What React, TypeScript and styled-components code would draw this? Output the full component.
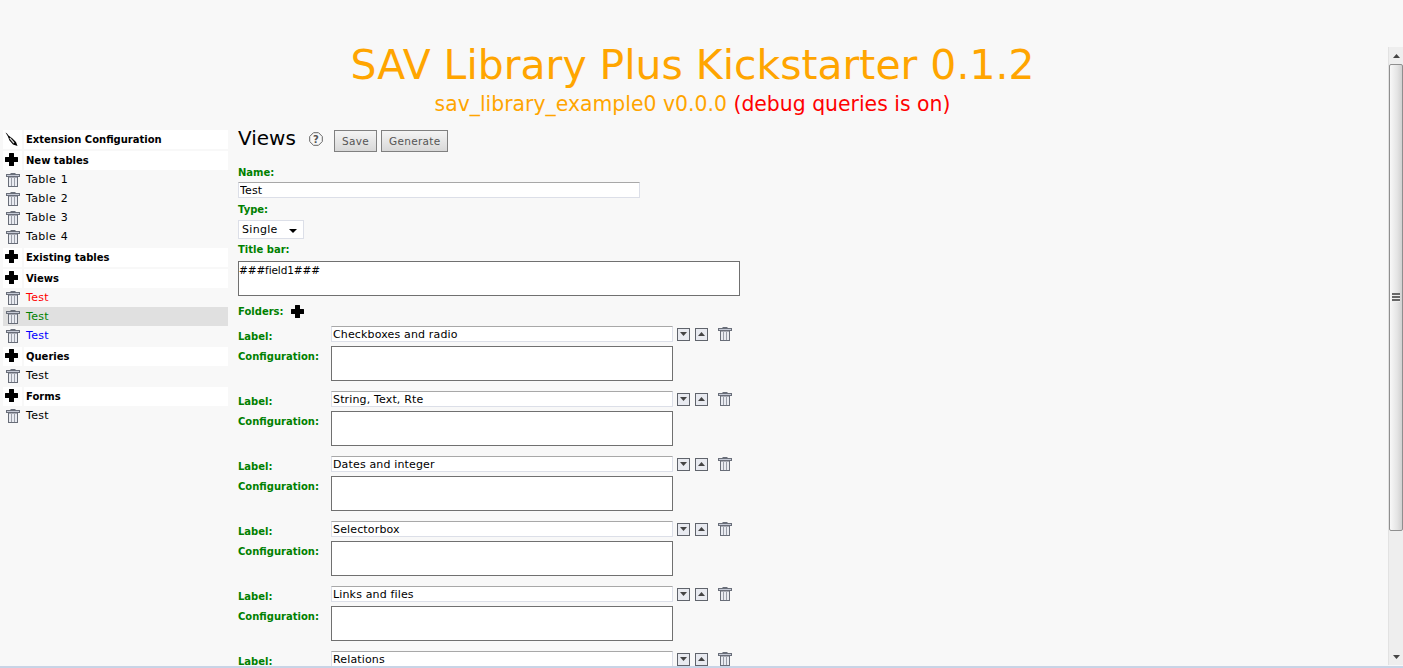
import React from 'react';
import styled, { createGlobalStyle } from 'styled-components';

const FONT = '"DejaVu Sans", Verdana, sans-serif';

const GlobalStyle = createGlobalStyle`
  html, body {
    margin: 0;
    padding: 0;
    height: 668px;
    overflow: hidden;
    background: #f8f8f8;
  }
`;

const PlusIcon = () => (
  <svg width='13' height='13' viewBox='0 0 13 13'>
    <path d='M4 0.500Q4 0 4.500 0H8.500Q9 0 9 0.500V4H12.500Q13 4 13 4.500V8.500Q13 9 12.500 9H9V12.500Q9 13 8.500 13H4.500Q4 13 4 12.500V9H0.500Q0 9 0 8.500V4.500Q0 4 0.500 4H4Z' fill='#000' />
  </svg>
);

const TrashIcon = () => (
  <svg width='14' height='14' viewBox='0 0 14 14'>
    <rect x='4.500' y='0' width='5' height='1.500' fill='#6a6f7a' />
    <rect x='0.500' y='1.500' width='13' height='2' fill='#c6cad6' stroke='#6a6f7a' strokeWidth='1' />
    <rect x='2.500' y='4' width='9' height='9.500' fill='#e9ebf1' stroke='#686d78' strokeWidth='1' />
    <path d='M5.500 5v8M8.500 5v8' stroke='#9a9ea8' strokeWidth='1' />
  </svg>
);

const BrushIcon = () => (
  <svg width='13' height='15' viewBox='0 0 13 15'>
    <path d='M0.500 0.500L2 1.500L3.500 3.500L7.500 6.500L11 10L12.500 14L8 12.500L4.500 8.500L2.800 4.200Z' fill='#000' />
    <path d='M4.800 6L9 11' stroke='#d8d8d8' strokeWidth='1.200' />
  </svg>
);

const HelpIcon = () => (
  <svg width='14' height='14' viewBox='0 0 14 14'>
    <path d='M4.500 0.700H9.500L13.300 4.500V9.500L9.500 13.300H4.500L0.700 9.500V4.500Z' fill='none' stroke='#666' strokeWidth='1' />
    <text x='7' y='10.500' textAnchor='middle' fontSize='10' fontWeight='bold' fontFamily={FONT} fill='#555'>?</text>
  </svg>
);

const ArrowIcon = ({ up }: { up?: boolean }) => (
  <svg width='7' height='4' viewBox='0 0 7 4'>
    <path d={up ? 'M3.500 0L7 4H0Z' : 'M0 0H7L3.500 4Z'} fill='#444' />
  </svg>
);

type Row = { kind: 'head' | 'item'; text: string; icon?: 'plus' | 'brush'; color?: string; selected?: boolean };

const menu: Row[] = [
  { kind: 'head', text: 'Extension Configuration', icon: 'brush' },
  { kind: 'head', text: 'New tables', icon: 'plus' },
  { kind: 'item', text: 'Table 1' },
  { kind: 'item', text: 'Table 2' },
  { kind: 'item', text: 'Table 3' },
  { kind: 'item', text: 'Table 4' },
  { kind: 'head', text: 'Existing tables', icon: 'plus' },
  { kind: 'head', text: 'Views', icon: 'plus' },
  { kind: 'item', text: 'Test', color: '#ff0000' },
  { kind: 'item', text: 'Test', color: '#008000', selected: true },
  { kind: 'item', text: 'Test', color: '#0000ff' },
  { kind: 'head', text: 'Queries', icon: 'plus' },
  { kind: 'item', text: 'Test' },
  { kind: 'head', text: 'Forms', icon: 'plus' },
  { kind: 'item', text: 'Test' },
];

const folders = [
  'Checkboxes and radio',
  'String, Text, Rte',
  'Dates and integer',
  'Selectorbox',
  'Links and files',
  'Relations',
];

export default function App() {
  return (
    <Page>
      <GlobalStyle />
      <Content>
        <Header>
          <Title>SAV Library Plus Kickstarter 0.1.2</Title>
          <SubTitle>
            sav_library_example0 v0.0.0 <Debug>(debug queries is on)</Debug>
          </SubTitle>
        </Header>
        <Columns>
          <Sidebar>
            {menu.map((row, i) =>
              row.kind === 'head' ? (
                <HeadRow key={i}>
                  <HeadIcon>{row.icon === 'brush' ? <BrushIcon /> : <PlusIcon />}</HeadIcon>
                  <HeadText>{row.text}</HeadText>
                </HeadRow>
              ) : (
                <ItemRow key={i} $selected={row.selected}>
                  <ItemIcon><TrashIcon /></ItemIcon>
                  <ItemText $color={row.color}>{row.text}</ItemText>
                </ItemRow>
              ),
            )}
          </Sidebar>
          <Main>
            <Toolbar>
              <Heading>Views</Heading>
              <HelpBox><HelpIcon /></HelpBox>
              <ToolButton>Save</ToolButton>
              <ToolButton>Generate</ToolButton>
            </Toolbar>
            <FieldLabel $top={14}>Name:</FieldLabel>
            <TextInput $width={402} $top={3} readOnly value='Test' />
            <FieldLabel $top={5}>Type:</FieldLabel>
            <SelectBox>
              <span>Single</span>
              <ArrowDown />
            </SelectBox>
            <FieldLabel $top={4}>Title bar:</FieldLabel>
            <TextBlock $width={502} $height={35} $top={5} readOnly value='###field1###' />
            <FoldersRow>
              <FieldLabel>Folders:</FieldLabel>
              <PlusIcon />
            </FoldersRow>
            <FolderList>
              {folders.map((name, i) => (
                <Folder key={name}>
                  <FolderLabel>Label:</FolderLabel>
                  <LabelLine>
                    <TextInput $width={342} readOnly value={name} />
                    <MoveButton><ArrowIcon /></MoveButton>
                    <MoveButton><ArrowIcon up /></MoveButton>
                    <DeleteBox><TrashIcon /></DeleteBox>
                  </LabelLine>
                  {/* the last folder runs off the bottom of the frame */}
                  {i < folders.length - 1 && (
                    <>
                      <ConfigLabel>Configuration:</ConfigLabel>
                      <TextBlock $width={342} $height={35} readOnly value='' />
                    </>
                  )}
                </Folder>
              ))}
            </FolderList>
          </Main>
        </Columns>
      </Content>
      <ScrollColumn>
        <ScrollButton><ArrowIcon up /></ScrollButton>
        <ScrollThumb><Grip /></ScrollThumb>
        <ScrollTrack />
        <ScrollButton><ArrowIcon /></ScrollButton>
      </ScrollColumn>
      <BottomLine />
    </Page>
  );
}

const Page = styled.div`
  position: relative;
  display: flex;
  width: 1403px;
  height: 668px;
  overflow: hidden;
  background: #f8f8f8;
  font-family: ${FONT};
`;

const Content = styled.div`
  width: 1385px;
  height: 668px;
  overflow: hidden;
`;

const Header = styled.div`
  height: 130px;
  padding-top: 36px;
  box-sizing: border-box;
  text-align: center;
`;

const Title = styled.div`
  font-size: 40.900px;
  line-height: 58px;
  color: #ffa500;
`;

const SubTitle = styled.div`
  font-size: 20.400px;
  line-height: 20px;
  color: #ffa500;
`;

const Debug = styled.span`
  color: #ff0000;
`;

const Columns = styled.div`
  display: flex;
`;

const Sidebar = styled.div`
  width: 225px;
  margin-left: 3px;
  flex: none;
`;

const HeadRow = styled.div`
  display: flex;
  gap: 2px;
  height: 19px;
  margin-top: 2px;
  &:first-child {
    margin-top: 0;
  }
`;

const HeadIcon = styled.div`
  box-sizing: border-box;
  width: 19px;
  padding: 2px 0 0 2px;
  background: #fff;
  svg {
    display: block;
  }
`;

const HeadText = styled.div`
  flex: 1;
  padding-left: 2px;
  background: #fff;
  font-size: 10px;
  font-weight: bold;
  line-height: 19px;
  color: #000;
`;

const ItemRow = styled.div<{ $selected?: boolean }>`
  display: flex;
  gap: 2px;
  height: 19px;
  background: ${(p) => (p.$selected ? '#e0e0e0' : 'transparent')};
`;

const ItemIcon = styled.div`
  display: flex;
  align-items: center;
  justify-content: center;
  width: 19px;
  padding-top: 1px;
  box-sizing: border-box;
`;

const ItemText = styled.div<{ $color?: string }>`
  padding-left: 2px;
  font-size: 11px;
  letter-spacing: 0.3px;
  word-spacing: 1px;
  line-height: 20px;
  color: ${(p) => p.$color || '#000'};
`;

const Main = styled.div`
  margin-left: 10px;
  flex: 1;
  display: flex;
  flex-direction: column;
  align-items: flex-start;
`;

const Toolbar = styled.div`
  display: flex;
  align-items: flex-start;
  height: 22px;
`;

const Heading = styled.div`
  width: 71px;
  font-size: 20px;
  line-height: 17px;
  color: #000;
`;

const HelpBox = styled.div`
  width: 25px;
  height: 14px;
  margin-top: 1px;
`;

const ToolButton = styled.div`
  box-sizing: border-box;
  height: 22px;
  padding: 0 7px;
  margin-right: 4px;
  border: 1px solid #808080;
  background: linear-gradient(#f4f4f4, #d8d8d8);
  font-size: 10.500px;
  line-height: 21px;
  letter-spacing: 0.3px;
  color: #555;
`;

const FieldLabel = styled.div<{ $top?: number }>`
  margin-top: ${(p) => p.$top || 0}px;
  font-size: 10px;
  font-weight: bold;
  line-height: 13px;
  color: #008000;
`;

const TextInput = styled.input<{ $width: number; $top?: number }>`
  display: block;
  box-sizing: border-box;
  width: ${(p) => p.$width}px;
  height: 16px;
  margin: ${(p) => p.$top || 0}px 0 0;
  padding: 0 1px;
  border: 1px solid #dcdfe8;
  border-top-color: #a8a8a8;
  border-radius: 0;
  outline: none;
  background: #fff;
  font-family: ${FONT};
  font-size: 11px;
  letter-spacing: 0.15px;
  color: #000;
`;

const SelectBox = styled.div`
  box-sizing: border-box;
  display: flex;
  align-items: center;
  justify-content: space-between;
  width: 66px;
  height: 19px;
  margin-top: 4px;
  padding: 0 6px 0 3px;
  border: 1px solid #dcdfe8;
  background: #fff;
  font-size: 11px;
  letter-spacing: 0.3px;
  color: #000;
`;

const ArrowDown = styled.span`
  width: 0;
  height: 0;
  margin-top: 2px;
  border-left: 4px solid transparent;
  border-right: 4px solid transparent;
  border-top: 4px solid #000;
`;

const TextBlock = styled.textarea<{ $width: number; $height: number; $top?: number }>`
  display: block;
  box-sizing: border-box;
  width: ${(p) => p.$width}px;
  height: ${(p) => p.$height}px;
  margin: ${(p) => p.$top || 0}px 0 0;
  padding: 2px 0;
  border: 1px solid #707070;
  border-radius: 0;
  outline: none;
  resize: none;
  overflow: hidden;
  background: #fff;
  font-family: ${FONT};
  font-size: 10.500px;
  letter-spacing: -0.1px;
  line-height: 13px;
  color: #000;
`;

const FoldersRow = styled.div`
  display: flex;
  align-items: center;
  gap: 7px;
  height: 14px;
  margin-top: 8px;
`;

const FolderList = styled.div`
  margin-top: 8px;
`;

const Folder = styled.div`
  display: grid;
  grid-template-columns: 93px auto;
  grid-template-rows: 16px 35px;
  row-gap: 4px;
  height: 65px;
`;

const FolderLabel = styled.div`
  padding-top: 4px;
  font-size: 10px;
  font-weight: bold;
  line-height: 13px;
  color: #008000;
`;

const ConfigLabel = styled(FolderLabel)`
  padding-top: 4px;
`;

const LabelLine = styled.div`
  display: flex;
  align-items: center;
`;

const MoveButton = styled.div`
  display: flex;
  align-items: center;
  justify-content: center;
  box-sizing: border-box;
  width: 13px;
  height: 13px;
  margin: 0 1px 0 4px;
  border: 1px solid #60646c;
  background: #e8eaf0;
`;

const DeleteBox = styled.div`
  width: 14px;
  height: 14px;
  margin: -1px 0 0 9px;
  svg {
    display: block;
  }
`;

const ScrollColumn = styled.div`
  display: flex;
  flex-direction: column;
  width: 15px;
  margin: 47px 0 3px 3px;
  background: #eeeeee;
  border-left: 1px solid #e2e2e2;
  box-sizing: border-box;
`;

const ScrollButton = styled.div`
  display: flex;
  align-items: center;
  justify-content: center;
  height: 17px;
  flex: none;
`;

const ScrollThumb = styled.div`
  display: flex;
  align-items: center;
  justify-content: center;
  box-sizing: border-box;
  height: 467px;
  flex: none;
  border: 1px solid #8f8f8f;
  border-radius: 2px;
  background: linear-gradient(90deg, #f8f8f8, #e4e4e4 60%, #d0d0d0);
`;

const Grip = styled.div`
  width: 8px;
  height: 9px;
  background: repeating-linear-gradient(#666 0 2px, #eee 2px 3px);
`;

const ScrollTrack = styled.div`
  flex: 1;
`;

const BottomLine = styled.div`
  position: absolute;
  left: 0;
  right: 0;
  bottom: 0;
  height: 2px;
  background: #c8d4e6;
`;
